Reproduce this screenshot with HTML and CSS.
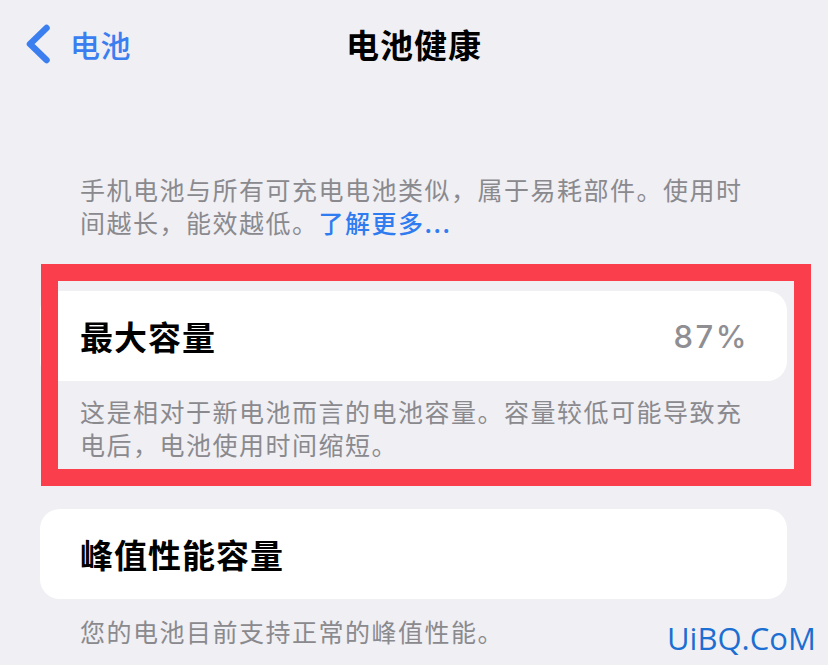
FILE: index.html
```html
<!DOCTYPE html>
<html lang="zh-CN">
<head>
    <meta charset="UTF-8">
    <title>电池健康</title>

    <link rel="stylesheet" href="styles.css">
</head>
<body>
    <div class="screen">
        <header class="nav">
            <a class="back">
                <svg class="chevron" width="24" height="40" viewBox="0 0 24 40">
                    <path d="M20.5 4 L4 20 L20.5 36" />
                </svg>
                <span>电池</span>
            </a>
            <h1 class="nav-title">电池健康</h1>
        </header>

        <p class="intro">手机电池与所有可充电电池类似，属于易耗部件。使用时间越长，能效越低。<a class="more">了解更多...</a></p>

        <section class="group first">
            <div class="card">
                <span class="card-title">最大容量</span>
                <span class="card-value">87%</span>
            </div>
            <p class="note">这是相对于新电池而言的电池容量。容量较低可能导致充电后，电池使用时间缩短。</p>
            <div class="mark"></div>
        </section>

        <section class="group second">
            <div class="card">
                <span class="card-title">峰值性能容量</span>
            </div>
            <p class="note">您的电池目前支持正常的峰值性能。</p>
        </section>

        <div class="watermark">UiBQ.CoM</div>
    </div>
</body>
</html>
```

FILE: styles.css
```css
body {
    margin: 0;
    background: #f0eff4;
    font-family: "Noto Sans CJK SC", "Noto Sans", sans-serif;
}

.screen {
    position: relative;
    width: 828px;
    height: 665px;
    overflow: hidden;
}

/* 상단 내비게이션 */
.nav {
    height: 88px;
    display: grid;
    grid-template-columns: 1fr auto 1fr;
    align-items: center;
}
.back {
    display: flex;
    align-items: center;
    gap: 20px;
    padding-left: 26px;
    color: #3a7ef0;
    font-size: 30px;
    font-weight: 500;
    letter-spacing: 0.5px;
}
.chevron path {
    fill: none;
    stroke: #3a7ef0;
    stroke-width: 6.5;
    stroke-linecap: round;
    stroke-linejoin: round;
}
.nav-title {
    grid-column: 2;
    margin: 0;
    font-size: 33px;
    font-weight: 700;
    letter-spacing: 1px;
    color: #000;
}

/* 설명 문구 */
.intro,
.note {
    margin: 0;
    padding: 0 68px 0 80px;
    font-size: 25px;
    line-height: 33px;
    letter-spacing: 1.5px;
    color: #8a8a8e;
}
.intro {
    margin-top: 85px;
}
.more {
    color: #2f7cf0;
    font-weight: 500;
}

/* 카드 */
.group {
    position: relative;
}
.group.first { margin-top: 52px; }
.group.second { margin-top: 48px; }

.card {
    margin: 0 41px 0 40px;
    height: 90px;
    padding: 0 38px 0 40px;
    display: flex;
    align-items: center;
    justify-content: space-between;
    background: #fff;
    border-radius: 20px;
}
.card-title {
    font-size: 33px;
    font-weight: 700;
    letter-spacing: 1px;
    color: #000;
}
.card-value {
    font-family: Inter, "Noto Sans", sans-serif;
    font-size: 31px;
    font-weight: 500;
    letter-spacing: 2.5px;
    color: #8e8e93;
}
.first .note { padding-top: 14px; }
.second .note { padding-top: 16px; }

/* 빨간 강조 박스 */
.mark {
    position: absolute;
    top: -27px;
    left: 41px;
    width: 770px;
    height: 222px;
    box-sizing: border-box;
    border: 17px solid #fb3e4b;
}

.watermark {
    position: absolute;
    left: 667px;
    top: 618px;
    font-family: "Open Sans", sans-serif;
    font-size: 31px;
    line-height: 40px;
    color: #1c6fd2;
}
```
